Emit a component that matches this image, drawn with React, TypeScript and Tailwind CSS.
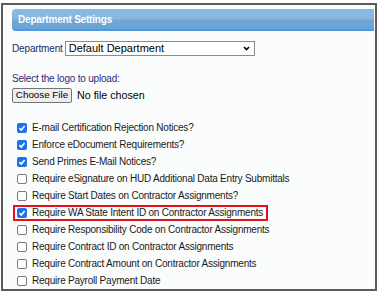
import React from "react";

const items: { label: string; checked: boolean; highlight?: boolean }[] = [
  { label: "E-mail Certification Rejection Notices?", checked: true },
  { label: "Enforce eDocument Requirements?", checked: true },
  { label: "Send Primes E-Mail Notices?", checked: true },
  { label: "Require eSignature on HUD Additional Data Entry Submittals", checked: false },
  { label: "Require Start Dates on Contractor Assignments?", checked: false },
  { label: "Require WA State Intent ID on Contractor Assignments", checked: true, highlight: true },
  { label: "Require Responsibility Code on Contractor Assignments", checked: false },
  { label: "Require Contract ID on Contractor Assignments", checked: false },
  { label: "Require Contract Amount on Contractor Assignments", checked: false },
  { label: "Require Payroll Payment Date", checked: false },
];

function Box({ checked }: { checked: boolean }) {
  if (checked) {
    return (
      <span className="flex h-[10px] w-[10px] shrink-0 items-center justify-center rounded-[2px] bg-[#1a73e8]">
        <svg width="8" height="8" viewBox="0 0 8 8">
          <path d="M1.4 4.2 L3.3 6 L6.6 2" fill="none" stroke="white" strokeWidth="1.6" />
        </svg>
      </span>
    );
  }
  return <span className="h-[10px] w-[10px] shrink-0 rounded-[2px] border border-[#7a7a7a] bg-white" />;
}

export default function App() {
  return (
    <div className="h-[293px] w-[378px] bg-white pl-[1px] pt-[3px]" style={{ fontFamily: '"Liberation Sans", Arial, sans-serif' }}>
      <div className="h-[288px] w-[376px] border-2 border-[#5a5a5a] bg-[#fbfdfc] pl-[9px] pt-[4px]">
        <div className="flex h-[22px] w-[362px] items-center rounded-l-[4px] border-b-2 border-[#4f9ade] bg-[linear-gradient(#8bbae1_0%,#86b6df_50%,#6fa7d7_55%,#6aa3d5_100%)] pl-[6px] text-[10px] font-bold tracking-[-0.2px] text-white">
          Department Settings
        </div>
        <div className="mt-[10px] flex h-[14px] items-center text-[10px] tracking-[-0.15px] text-[#1f2a66]">
          <span>Department</span>
          <div className="ml-[2px] flex h-[15px] w-[190px] items-center justify-between border border-[#8a8a8a] bg-white pl-[3px] pr-[4px] text-[11px] tracking-normal text-black">
            <span>Default Department</span>
            <svg width="7" height="5" viewBox="0 0 7 5">
              <path d="M1 1 L3.5 3.6 L6 1" fill="none" stroke="black" strokeWidth="1.5" />
            </svg>
          </div>
        </div>
        <div className="mt-[18px] text-[10px] leading-[12px] tracking-[-0.2px] text-[#2f2a7a]">Select the logo to upload:</div>
        <div className="mt-[2px] flex items-center">
          <span className="flex h-[15px] w-[60px] items-center justify-center rounded-[2px] border border-[#767676] bg-[#efefef] text-[9.8px] text-black">Choose File</span>
          <span className="ml-[5px] text-[10.7px] text-black">No file chosen</span>
        </div>
        <div className="mt-[16px] flex flex-col">
          {items.map((it) => (
            <div key={it.label} className="flex h-[17px] items-center">
              <div
                className={
                  "flex items-center gap-[5px] text-[10px] tracking-[-0.22px] text-[#1a1a1a] " +
                  (it.highlight ? "ml-[1px] h-[16px] w-[255px] border-2 border-[#e5121b] pl-[2px]" : "pl-[5px]")
                }
              >
                <Box checked={it.checked} />
                <span className="whitespace-nowrap">{it.label}</span>
              </div>
            </div>
          ))}
        </div>
      </div>
    </div>
  );
}
